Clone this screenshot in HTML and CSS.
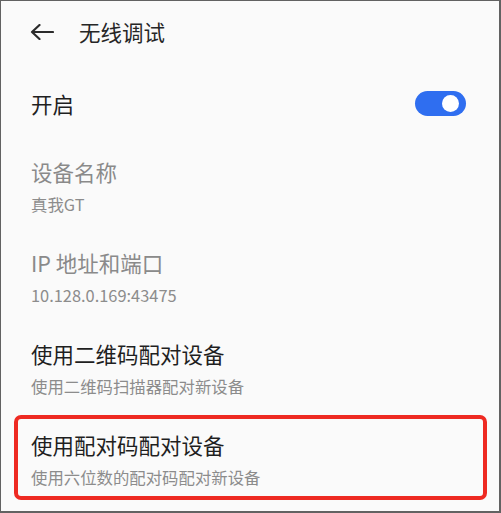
FILE: index.html
```html
<!DOCTYPE html>
<html lang="zh-CN">
<head>
<meta charset="utf-8">
<title>无线调试</title>
<link rel="stylesheet" href="styles.css">
</head>
<body>
<div class="screen">
  <header class="topbar">
    <svg class="back" width="24" height="16" viewBox="0 0 24 16" aria-hidden="true">
      <path d="M2 8 H23 M9.5 1 L2 8 L9.5 15" fill="none" stroke="#2b2b2b" stroke-width="2.2" stroke-linecap="round" stroke-linejoin="round"/>
    </svg>
    <span class="title">无线调试</span>
  </header>

  <div class="row switch-row">
    <span class="main">开启</span>
    <span class="toggle"><span class="knob"></span></span>
  </div>

  <div class="item">
    <div class="main muted">设备名称</div>
    <div class="sub">真我GT</div>
  </div>

  <div class="item">
    <div class="main muted">IP 地址和端口</div>
    <div class="sub">10.128.0.169:43475</div>
  </div>

  <div class="item">
    <div class="main">使用二维码配对设备</div>
    <div class="sub">使用二维码扫描器配对新设备</div>
  </div>

  <div class="item highlighted">
    <div class="main">使用配对码配对设备</div>
    <div class="sub">使用六位数的配对码配对新设备</div>
  </div>
</div>
</body>
</html>
```

FILE: styles.css
```css
html, body {
  margin: 0;
  padding: 0;
  background: #fafafa;
}

body {
  font-family: "Noto Sans CJK SC", "Noto Sans", sans-serif;
  color: #222222;
}

.screen {
  box-sizing: border-box;
  width: 501px;
  height: 513px;
  border-style: solid;
  border-color: #626262;
  border-width: 1px 2px 2px 1px;
  background: #fafafa;
  overflow: hidden;
}

.topbar {
  height: 62px;
  display: flex;
  align-items: center;
  padding-left: 29px;
}

.back {
  display: block;
  margin-right: 25px;
}

.title {
  font-size: 21.5px;
  line-height: 30px;
  color: #262626;
}

.row {
  display: flex;
  align-items: center;
  justify-content: space-between;
}

.switch-row {
  height: 80px;
  padding-left: 30px;
  padding-right: 33px;
}

.switch-row .main {
  padding-top: 2px;
}

.main {
  font-size: 21.5px;
  line-height: 30px;
  color: #1f1f1f;
}

.main.muted {
  color: #8a8a8a;
}

.sub {
  margin-top: 2px;
  font-size: 16.4px;
  line-height: 30px;
  color: #8c8c8c;
}

.item {
  padding: 14px 20px 15px 30px;
}

.item.highlighted {
  margin: -1px 12px 0 13px;
  padding: 11px 10px 4px 13px;
  border: 4px solid #ee2a22;
  border-radius: 7px;
}

.toggle {
  position: relative;
  display: block;
  width: 51px;
  height: 25px;
  border-radius: 13px;
  background: #2f6ef0;
}

.knob {
  position: absolute;
  top: 4px;
  right: 7px;
  width: 17px;
  height: 17px;
  border-radius: 50%;
  background: #ffffff;
}
```
